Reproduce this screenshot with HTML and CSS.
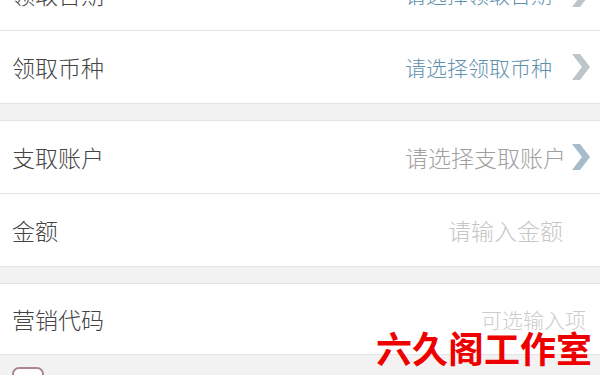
FILE: index.html
```html
<!DOCTYPE html>
<html lang="zh-CN">
<head>
    <meta charset="UTF-8">
    <meta name="viewport" content="width=device-width, initial-scale=1.0">
    <title>支取</title>
    <link rel="stylesheet" href="styles.css">
</head>
<body>
    <div class="form">
        <div class="group group-first">
            <div class="row">
                <span class="label">领取日期</span>
                <span class="value value-blue">请选择领取日期</span>
                <svg class="arrow" viewBox="0 0 18 28"><polygon points="0,1 8,1 18,14 8,27 0,27 10,14"/></svg>
            </div>
            <div class="row">
                <span class="label">领取币种</span>
                <span class="value value-blue">请选择领取币种</span>
                <svg class="arrow" viewBox="0 0 18 28"><polygon points="0,1 8,1 18,14 8,27 0,27 10,14"/></svg>
            </div>
        </div>
        <div class="group">
            <div class="row">
                <span class="label">支取账户</span>
                <span class="value value-grey">请选择支取账户</span>
                <svg class="arrow arrow-blue" viewBox="0 0 18 28"><polygon points="0,1 8,1 18,14 8,27 0,27 10,14"/></svg>
            </div>
            <div class="row">
                <span class="label">金额</span>
                <span class="value value-input">请输入金额</span>
            </div>
        </div>
        <div class="group">
            <div class="row row-short">
                <span class="label">营销代码</span>
                <span class="value value-optional">可选输入项</span>
            </div>
        </div>
        <div class="agree">
            <span class="checkbox"></span>
        </div>
    </div>
    <div class="watermark">六久阁工作室</div>
</body>
</html>
```

FILE: styles.css
```css
* {
    box-sizing: border-box;
    margin: 0;
    padding: 0;
}
body {
    font-family: "Noto Sans CJK SC", "Noto Sans", sans-serif;
    background-color: #f2f2f2;
    width: 600px;
    height: 375px;
    overflow: hidden;
    position: relative;
}
.form {
    margin-top: -42px;
}
.group {
    background-color: #fff;
    border-top: 1px solid #e4e4e4;
    margin-bottom: 16px;
}
.group-first {
    border-top: none;
}
.row {
    display: flex;
    align-items: center;
    height: 73px;
    padding: 0 10px 0 12px;
    border-bottom: 1px solid #e4e4e4;
}
.row-short {
    height: 71px;
}
.label {
    font-size: 23px;
    font-weight: 300;
    color: #444;
    flex: 1;
}
.value {
    font-size: 23px;
    font-weight: 300;
    color: #999;
}
.value-blue {
    font-size: 21px;
    color: #5f90ad;
    margin-right: 20px;
}
.value-grey {
    color: #a0a0a0;
    margin-right: 6px;
}
.value-input {
    color: #c6c6c6;
    margin-right: 27px;
}
.value-optional {
    font-size: 21px;
    color: #cdcdcd;
    margin-right: 4px;
}
.arrow {
    width: 18px;
    height: 28px;
    fill: #bcc5c8;
}
.arrow-blue {
    fill: #a6bccb;
}
.agree {
    margin-top: -16px;
    padding: 12px 12px;
}
.checkbox {
    display: block;
    width: 32px;
    height: 30px;
    border: 2px solid #a9858d;
    border-radius: 7px;
    background-color: #fff;
}
.watermark {
    position: absolute;
    left: 376px;
    top: 321px;
    font-size: 36px;
    font-weight: bold;
    color: #ee0000;
}
```
